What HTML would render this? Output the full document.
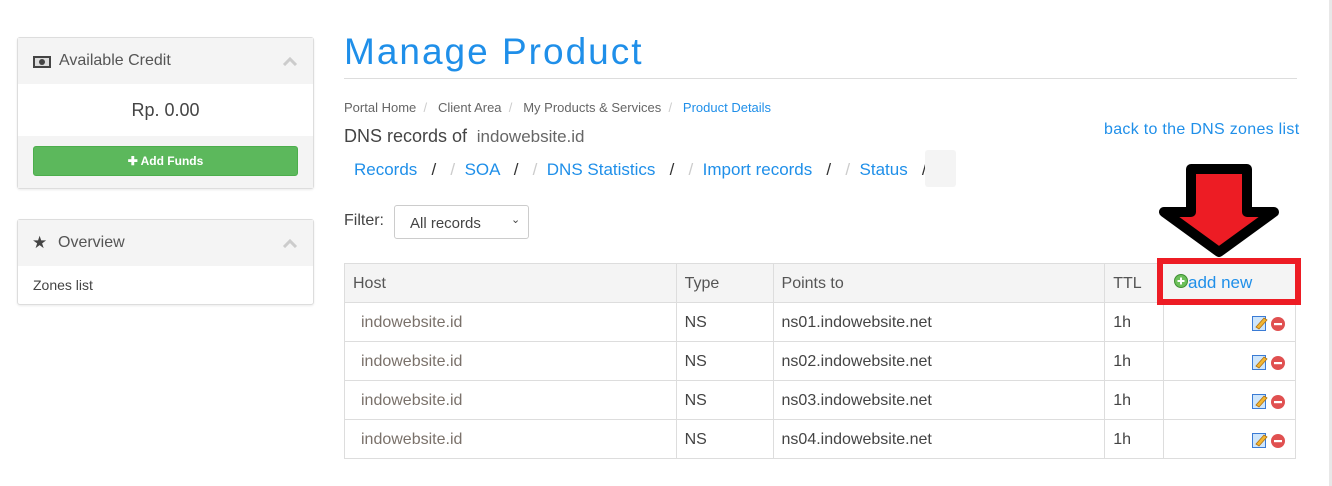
<!DOCTYPE html>
<html><head><meta charset="utf-8"><style>
*{box-sizing:border-box;margin:0;padding:0}
body{width:1332px;height:486px;background:#fff;font-family:"Liberation Sans",sans-serif;position:relative;overflow:hidden;color:#58595b}
.a{position:absolute;white-space:nowrap}
.panel{position:absolute;left:17px;width:297px;border:1px solid #ddd;border-radius:3px;background:#fff;box-shadow:0 1px 2px rgba(0,0,0,.08)}
.ph{background:#f4f4f4;height:46px;position:relative;font-size:16px;color:#555}
.blue{color:#1f8fe9}
table{position:absolute;left:344px;top:263px;border-collapse:collapse;font-size:16px;width:952px}
td,th{border:1px solid #ddd;height:39px;text-align:left;font-weight:normal;padding:2px 8px 0;color:#444}
th{background:#f4f4f4;color:#555}
td.h{color:#7a716a;padding-left:16px}
</style></head><body>
<div style="position:absolute;left:1329px;top:0;width:3px;height:486px;background:#e8e8e8"></div>

<div class="panel" style="top:37px;height:152px">
 <div class="ph"><svg class="a" style="left:15px;top:18px" width="18" height="12"><rect width="18" height="12" fill="#444"/><rect x="2" y="2" width="14" height="8" fill="#ddd"/><circle cx="9" cy="6" r="3" fill="#444"/></svg><span class="a" style="left:41px;top:14px">Available Credit</span><svg class="a" style="left:264px;top:18px" width="16" height="10"><path d="M2 9 L8 3 L14 9" stroke="#ccc" stroke-width="3" fill="none"/></svg></div>
 <div style="height:52px;text-align:center;font-size:18px;line-height:52px;color:#444">Rp. 0.00</div>
 <div style="background:#f4f4f4;height:52px;padding:10px 15px 0">
  <div style="background:#5cb85c;border:1px solid #4cae4c;border-radius:3px;height:30px;color:#fff;font-size:12px;text-align:center;line-height:28px;font-weight:bold">✚ Add Funds</div>
 </div>
</div>

<div class="panel" style="top:219px;height:86px">
 <div class="ph"><span class="a" style="left:14px;top:13px;font-size:17px;color:#444">★</span><span class="a" style="left:40px;top:14px">Overview</span><svg class="a" style="left:264px;top:18px" width="16" height="10"><path d="M2 9 L8 3 L14 9" stroke="#ccc" stroke-width="3" fill="none"/></svg></div>
 <div class="a" style="left:15px;top:57px;font-size:14px;color:#444">Zones list</div>
</div>

<div class="a blue" style="left:344px;top:31px;font-size:37px;letter-spacing:2px">Manage Product</div>
<div class="a" style="left:344px;top:78px;width:953px;height:1px;background:#ddd"></div>
<div class="a" style="left:344px;top:100px;font-size:13px;color:#666">Portal Home &nbsp;<span style="color:#ccc">/</span>&nbsp;&nbsp; Client Area &nbsp;<span style="color:#ccc">/</span>&nbsp;&nbsp; My Products &amp; Services &nbsp;<span style="color:#ccc">/</span>&nbsp;&nbsp; <span class="blue">Product Details</span></div>
<div class="a" style="left:344px;top:126px;font-size:18px;color:#444">DNS records of <span style="font-size:17px;color:#666">&nbsp;indowebsite.id</span></div>
<div class="a blue" style="left:1104px;top:121px;font-size:16px;letter-spacing:0.3px">back to the DNS zones list</div>
<div class="a" style="left:354px;top:160px;font-size:17px;color:#333"><span class="blue">Records</span> &nbsp; / &nbsp; <span style="color:#ccc">/</span> &nbsp;<span class="blue">SOA</span> &nbsp; / &nbsp; <span style="color:#ccc">/</span> &nbsp;<span class="blue">DNS Statistics</span> &nbsp; / &nbsp; <span style="color:#ccc">/</span> &nbsp;<span class="blue">Import records</span> &nbsp; / &nbsp; <span style="color:#ccc">/</span> &nbsp;<span class="blue">Status</span> &nbsp; /</div>
<div class="a" style="left:925px;top:150px;width:31px;height:37px;background:#f4f4f4;border-radius:3px"></div>
<div class="a" style="left:344px;top:212px;font-size:16px;color:#444">Filter:</div>
<div class="a" style="left:394px;top:205px;width:135px;height:34px;border:1px solid #ccc;border-radius:3px;font-size:15px;color:#444;padding:9px 0 0 15px">All records<span class="a" style="left:116px;top:7px;font-size:11px">⌄</span></div>

<table>
<tr><th style="width:332px">Host</th><th style="width:97px">Type</th><th style="width:332px">Points to</th><th style="width:59px">TTL</th><th style="width:132px"></th></tr>
<tr><td class="h">indowebsite.id</td><td>NS</td><td>ns01.indowebsite.net</td><td>1h</td><td></td></tr>
<tr><td class="h">indowebsite.id</td><td>NS</td><td>ns02.indowebsite.net</td><td>1h</td><td></td></tr>
<tr><td class="h">indowebsite.id</td><td>NS</td><td>ns03.indowebsite.net</td><td>1h</td><td></td></tr>
<tr><td class="h">indowebsite.id</td><td>NS</td><td>ns04.indowebsite.net</td><td>1h</td><td></td></tr>
</table>

<div class="a" style="left:1252px;top:316px;line-height:0">
<svg width="40" height="140">
<g id="r"><rect x="0.5" y="0.5" width="13" height="14" fill="#cfe6fb" stroke="#3a7bd5"/><path d="M4 11 L12 2 L15 4 L7 13 Z" fill="#f2b632" stroke="#b07010" stroke-width="0.8"/><circle cx="26" cy="8" r="7" fill="#e05050"/><rect x="22" y="7" width="8" height="2.2" fill="#fff"/></g>
<use href="#r" y="39"/><use href="#r" y="78"/><use href="#r" y="117"/>
</svg></div>

<div class="a" style="left:1157px;top:258px;width:144px;height:47px;border:6px solid #ed1c24;background:#f4f4f4"></div>
<div class="a blue" style="left:1174px;top:273px;font-size:17px"><svg style="vertical-align:0" width="14" height="14"><circle cx="7" cy="7" r="6.5" fill="#6cbf5a" stroke="#3f8f32"/><path d="M7 3.5V10.5M3.5 7H10.5" stroke="#fff" stroke-width="2"/></svg>add new</div>

<svg class="a" style="left:1150px;top:160px" width="140" height="102">
<path d="M41 9 H97 V52 H124 L69 92 L14 52 H41 Z" fill="#ed1c24" stroke="#000" stroke-width="10" stroke-linejoin="round"/>
</svg>
</body></html>
